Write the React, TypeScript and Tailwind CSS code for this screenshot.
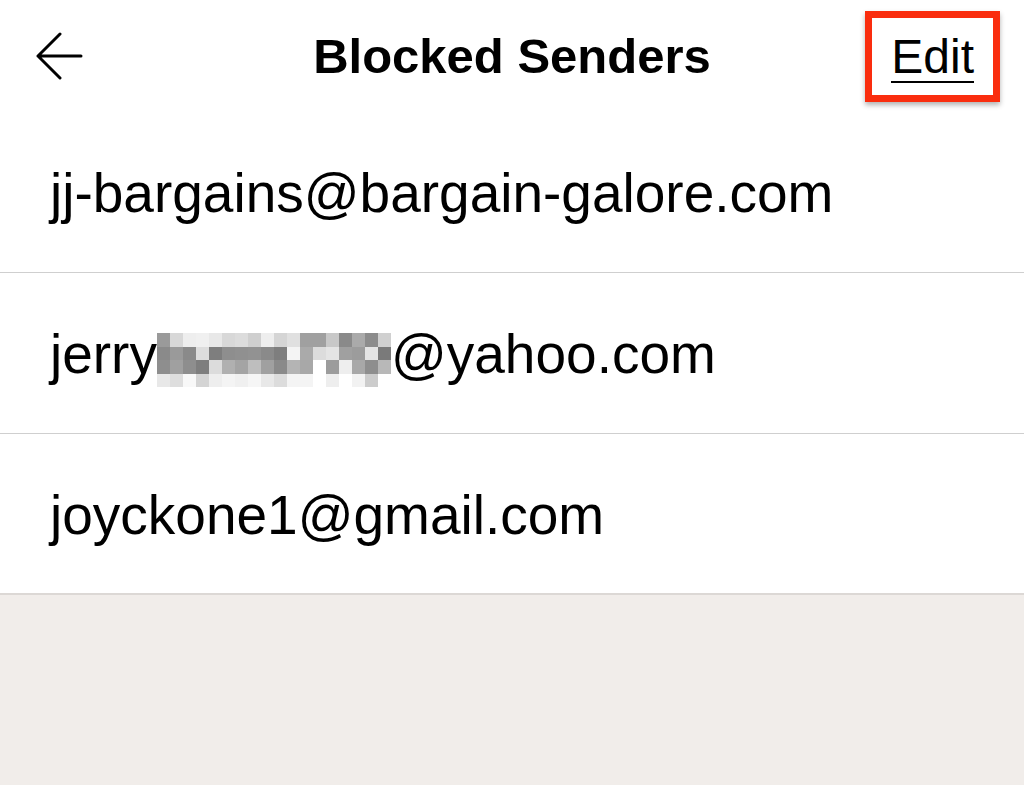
const blur = [
  ["#9a9a9a", "#d8d8d8", "#eeeeee", "#f0f0f0", "#e8e8e8", "#d8d8d8", "#dcdcdc", "#cfcfcf", "#eeeeee", "#d5d5d5", "#e0e0e0", "#a0a0a0", "#a0a0a0", "#c8c8c8", "#8a8a8a", "#aaaaaa", "#8c8c8c", "#d0d0d0"],
  ["#8a8a8a", "#9a9a9a", "#8a8a8a", "#dddddd", "#7e7e7e", "#8e8e8e", "#909090", "#929292", "#8a8a8a", "#7e7e7e", "#f4f4f4", "#aaaaaa", "#dcdcdc", "#e4e4e4", "#a0a0a0", "#9c9c9c", "#e4e4e4", "#7a7a7a"],
  ["#8e8e8e", "#a0a0a0", "#8e8e8e", "#7e7e7e", "#dcdcdc", "#b0b0b0", "#a4a4a4", "#bebebe", "#a0a0a0", "#8a8a8a", "#b4b4b4", "#a8a8a8", "#ffffff", "#9c9c9c", "#eeeeee", "#a8a8a8", "#8e8e8e", "#b8b8b8"],
  ["#e8e8e8", "#dedede", "#f8f8f8", "#d4d4d4", "#eeeeee", "#f4f4f4", "#f0f0f0", "#f6f6f6", "#e8e8e8", "#dcdcdc", "#f4f4f4", "#f4f4f4", "#ffffff", "#eeeeee", "#ffffff", "#f2f2f2", "#cccccc", "#ffffff"],
]

const Pixelated = () => (
  <div className="grid grid-cols-[repeat(18,13px)] grid-rows-[repeat(4,13.5px)] mt-[11px]">
    {blur.flat().map((c, i) => (
      <span key={i} style={{ backgroundColor: c }} />
    ))}
  </div>
)

const BackArrow = () => (
  <svg width="48" height="48" viewBox="0 0 48 48" fill="none" stroke="#000" strokeWidth="3" strokeLinecap="round" strokeLinejoin="round">
    <path d="M25 2 L3 24 L25 46 M3 24 H46" />
  </svg>
)

const Row = ({ children, last }: { children: React.ReactNode; last?: boolean }) => (
  <div className={`flex items-center h-[161px] pl-[50px] pt-[3px] text-[55px] leading-none text-black ${last ? "border-b-2 border-[#dcd8d5]" : "border-b border-[#cfcfcf]"}`}>
    {children}
  </div>
)

export default function App() {
  return (
    <div className="w-[1024px] h-[785px] flex flex-col bg-[#f1edea] font-['Liberation_Sans',Arial,sans-serif]">
      <div className="bg-white">
        <div className="grid grid-cols-[1fr_auto_1fr] items-center h-[112px]">
          <div className="pl-[35px] flex items-center">
            <BackArrow />
          </div>
          <h1 className="text-[49px] leading-none font-bold text-black">Blocked Senders</h1>
          <div className="flex justify-end pr-[24px]">
            <div className="border-[7px] border-[#fa2d0e] px-[19px] pt-[15px] pb-[12px] shadow-[0_3px_5px_rgba(0,0,0,0.3)]">
              <span className="block text-[48px] leading-none text-black border-b-2 border-black">Edit</span>
            </div>
          </div>
        </div>
        <Row>
          <span>jj-bargains@bargain-galore.com</span>
        </Row>
        <Row>
          <span>jerry</span>
          <Pixelated />
          <span>@yahoo.com</span>
        </Row>
        <Row last>
          <span>joyckone1@gmail.com</span>
        </Row>
      </div>
    </div>
  )
}
